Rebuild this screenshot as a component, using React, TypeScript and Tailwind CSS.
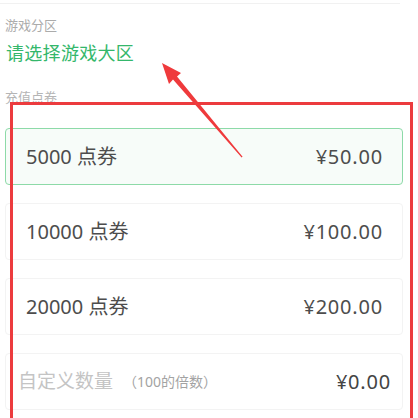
import React from 'react';

const FONT = '"Noto Sans", "Noto Sans CJK SC", sans-serif';

const packs = [
  { points: '5000 点券', price: '¥50.00', active: true },
  { points: '10000 点券', price: '¥100.00', active: false },
  { points: '20000 点券', price: '¥200.00', active: false },
];

export default function App() {
  return (
    <div className="relative h-[418px] w-[418px] overflow-hidden bg-white" style={{ fontFamily: FONT }}>
      {/* previous section divider */}
      <div className="mt-[3px] h-px w-[400px] bg-[#f1f1f1]" />

      <div className="px-[5px]">
        <p className="mt-[12px] text-[13px] leading-[18px] text-[#ababab]">游戏分区</p>
        <p className="mt-[7px] pl-[1px] text-[18px] leading-[24px] tracking-[0.3px] text-[#34b76b]">
          请选择游戏大区
        </p>
        <p className="mt-[23px] text-[13px] leading-[18px] text-[#b5b5b5]">充值点卷</p>

        {/* Recharge packs */}
        <div className="mt-[22px] flex flex-col gap-[18px]">
          {packs.map((p) => (
            <div
              key={p.points}
              className={`flex h-[57px] w-[398px] items-center justify-between rounded-[4px] border pr-[19px] pl-[20px] text-[20px] text-[#4d4d4d] ${
                p.active ? 'border-[#8ddaa8] bg-[#f7fcf9]' : 'border-[#f3f3f3] bg-white'
              }`}
            >
              <span>{p.points}</span>
              <span className="tracking-[0.8px]">{p.price}</span>
            </div>
          ))}

          {/* Custom amount */}
          <div className="flex h-[57px] w-[398px] items-center justify-between rounded-[4px] border border-[#f3f3f3] bg-white pr-[11px] pl-[12px]">
            <div className="flex items-center">
              <span className="text-[19px] text-[#c4c4c4]">自定义数量</span>
              <span className="ml-[10px] text-[14px] text-[#a3a3a3]">（100的倍数）</span>
            </div>
            <span className="text-[20px] tracking-[0.8px] text-[#444]">¥0.00</span>
          </div>
        </div>
      </div>

      {/* annotation: red frame */}
      <div className="pointer-events-none absolute top-[102px] left-[10px] h-[340px] w-[403px] border-[3px] border-[#ec3b3e]" />

      {/* annotation: arrow */}
      <svg className="pointer-events-none absolute top-0 left-0" width="418" height="418" viewBox="0 0 418 418">
        <polygon
          points="162,63 181,73 177,76.5 242.6,156.7 241.6,157.4 173,79.6 169,84"
          fill="#ef3a3c"
        />
      </svg>
    </div>
  );
}
